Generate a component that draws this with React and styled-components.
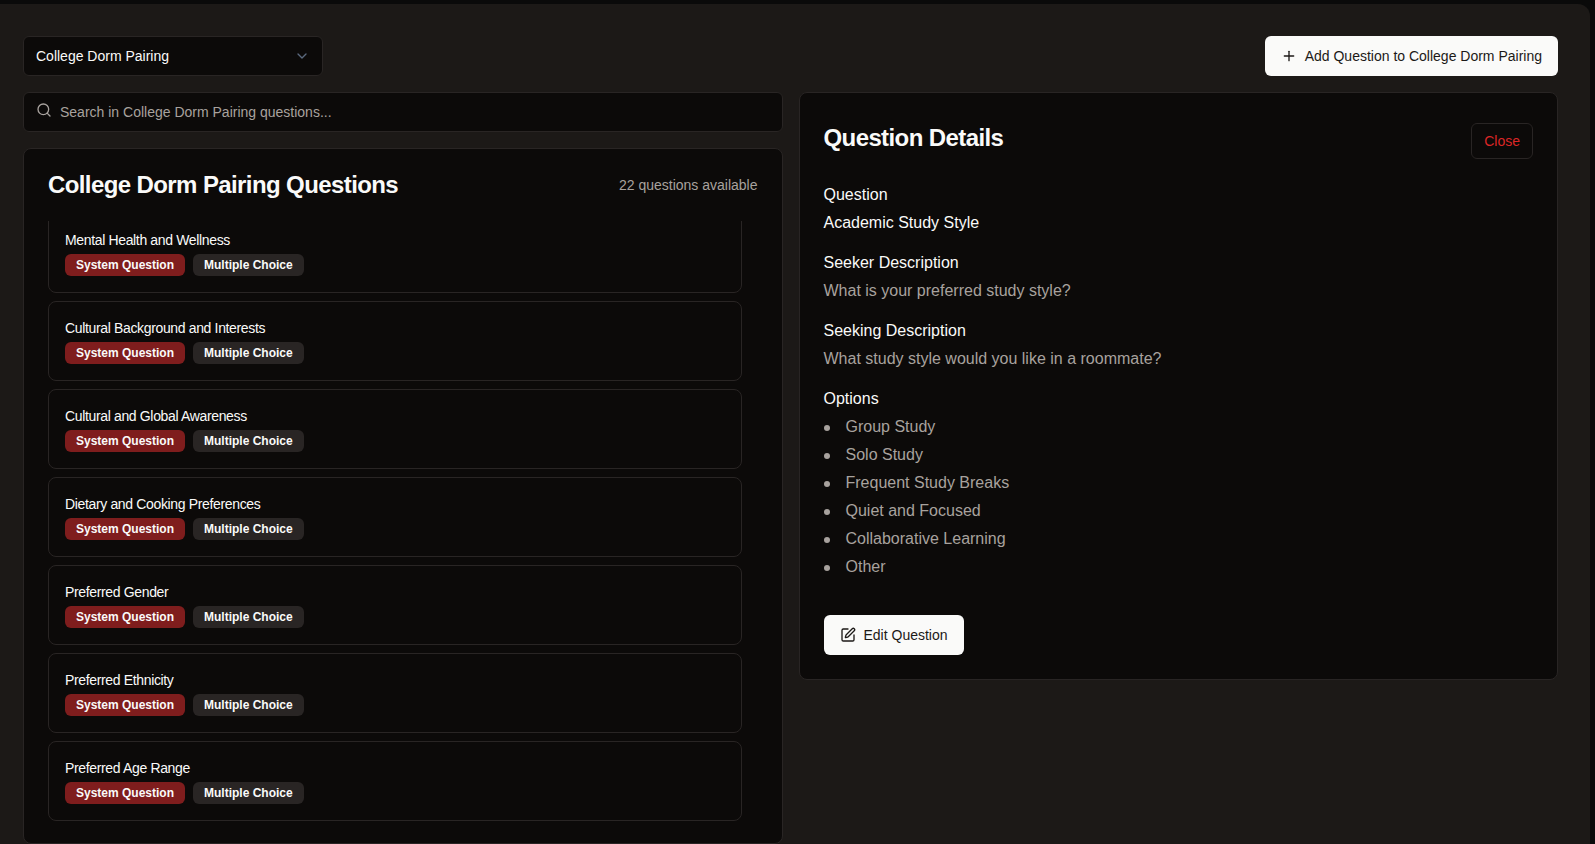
import React from 'react';
import styled, { createGlobalStyle } from 'styled-components';
import { ChevronDown, Search, Plus, SquarePen } from 'lucide-react';

const GlobalStyle = createGlobalStyle`
  * { box-sizing: border-box; }
  html, body {
    margin: 0;
    height: 100%;
    overflow: hidden;
    background: #0a0a0a;
    color: #fafaf9;
    font-family: "Liberation Sans", Arial, sans-serif;
  }
`;

const Panel = styled.main`
  height: 840px;
  margin: 4px 5px 0 0;
  padding: 32px 32px 0 23px;
  background: #1c1917;
  border-top-right-radius: 12px;
  overflow: hidden;
`;

const TopBar = styled.div`
  display: flex;
  justify-content: space-between;
  align-items: flex-start;
  margin-bottom: 16px;
`;

const SelectBox = styled.button`
  display: flex;
  align-items: center;
  justify-content: space-between;
  width: 300px;
  height: 40px;
  padding: 0 12px;
  background: #0c0a09;
  border: 1px solid #292524;
  border-radius: 6px;
  color: #fafaf9;
  font: 14px "Liberation Sans", Arial, sans-serif;
  svg { color: #64748b; opacity: 0.9; }
`;

const PrimaryButton = styled.button`
  display: inline-flex;
  align-items: center;
  gap: 8px;
  height: 40px;
  padding: 0 16px;
  background: #fafaf9;
  border: none;
  border-radius: 6px;
  color: #1c1917;
  font: 14px "Liberation Sans", Arial, sans-serif;
`;

const Columns = styled.div`
  display: grid;
  grid-template-columns: 1fr 1fr;
  gap: 16px;
  align-items: start;
`;

const LeftColumn = styled.div`
  display: flex;
  flex-direction: column;
  gap: 16px;
`;

const SearchBox = styled.label`
  display: flex;
  align-items: center;
  gap: 8px;
  height: 40px;
  padding: 0 12px;
  background: #0c0a09;
  border: 1px solid #292524;
  border-radius: 6px;
  svg { color: #a8a29e; margin-bottom: 4px; }
`;

const SearchInput = styled.input`
  flex: 1;
  padding: 0;
  background: transparent;
  border: none;
  outline: none;
  color: #fafaf9;
  font: 14px "Liberation Sans", Arial, sans-serif;
  &::placeholder { color: #a8a29e; opacity: 1; }
`;

const Card = styled.section`
  background: #0c0a09;
  border: 1px solid #292524;
  border-radius: 8px;
`;

const ListCard = styled(Card)`
  display: flex;
  flex-direction: column;
  height: 696px;
  padding: 0 24px 22px;
`;

const ListHeader = styled.header`
  display: flex;
  justify-content: space-between;
  align-items: center;
  height: 72px;
  flex: none;
`;

const Title = styled.h2`
  margin: 0;
  font-size: 24px;
  line-height: 32px;
  font-weight: 700;
  letter-spacing: -0.6px;
`;

const Count = styled.span`
  color: #a8a29e;
  font-size: 14px;
`;

const QuestionList = styled.div`
  flex: 1;
  min-height: 0;
  display: flex;
  flex-direction: column;
  justify-content: flex-end;
  gap: 8px;
  padding-right: 16px;
  overflow: hidden;
`;

const QuestionItem = styled.article`
  flex: none;
  height: 80px;
  padding: 16px;
  background: #0c0a09;
  border: 1px solid #292524;
  border-radius: 8px;
`;

const QuestionName = styled.div`
  font-size: 14px;
  line-height: 20px;
  letter-spacing: -0.35px;
  margin-bottom: 4px;
`;

const BadgeRow = styled.div`
  display: flex;
  gap: 8px;
`;

const Badge = styled.span`
  display: inline-flex;
  align-items: center;
  height: 22px;
  padding: 0 11px;
  border-radius: 6px;
  background: ${p => (p.$system ? '#7f1d1d' : '#292524')};
  color: #fafaf9;
  font-size: 12px;
  font-weight: 700;
`;

const DetailCard = styled(Card)`
  height: 588px;
  padding: 24px;
`;

const DetailHeader = styled.header`
  display: flex;
  justify-content: space-between;
  align-items: flex-start;
  margin-bottom: 22px;
`;

const DetailTitle = styled(Title)`
  margin-top: 5px;
`;

const CloseButton = styled.button`
  height: 36px;
  margin-top: 6px;
  padding: 0 12px;
  background: #0c0a09;
  border: 1px solid #292524;
  border-radius: 6px;
  color: #dc2626;
  font: 14px "Liberation Sans", Arial, sans-serif;
`;

const Section = styled.div`
  margin-bottom: 12px;
`;

const Label = styled.div`
  font-size: 16px;
  line-height: 28px;
`;

const Value = styled.div`
  font-size: 16px;
  line-height: 28px;
  color: ${p => (p.$strong ? '#fafaf9' : '#a8a29e')};
`;

const OptionList = styled.ul`
  margin: 0;
  padding: 0;
  list-style: none;
  color: #a8a29e;
  font-size: 16px;
  line-height: 28px;
`;

const OptionItem = styled.li`
  display: flex;
  align-items: center;
  &::before {
    content: '';
    width: 6px;
    height: 6px;
    margin: 2px 16px 0 0;
    border-radius: 50%;
    background: #a8a29e;
  }
`;

const Actions = styled.div`
  margin-top: 34px;
`;

const questions = [
  'Mental Health and Wellness',
  'Cultural Background and Interests',
  'Cultural and Global Awareness',
  'Dietary and Cooking Preferences',
  'Preferred Gender',
  'Preferred Ethnicity',
  'Preferred Age Range',
];

const options = ['Group Study', 'Solo Study', 'Frequent Study Breaks', 'Quiet and Focused', 'Collaborative Learning', 'Other'];

export default function App() {
  return (
    <Panel>
      <GlobalStyle />
      <TopBar>
        <SelectBox>
          College Dorm Pairing
          <ChevronDown size={16} />
        </SelectBox>
        <PrimaryButton>
          <Plus size={16} />
          Add Question to College Dorm Pairing
        </PrimaryButton>
      </TopBar>
      <Columns>
        <LeftColumn>
          <SearchBox>
            <Search size={16} />
            <SearchInput placeholder="Search in College Dorm Pairing questions..." />
          </SearchBox>
          <ListCard>
            <ListHeader>
              <Title>College Dorm Pairing Questions</Title>
              <Count>22 questions available</Count>
            </ListHeader>
            <QuestionList>
              {questions.map(q => (
                <QuestionItem key={q}>
                  <QuestionName>{q}</QuestionName>
                  <BadgeRow>
                    <Badge $system>System Question</Badge>
                    <Badge>Multiple Choice</Badge>
                  </BadgeRow>
                </QuestionItem>
              ))}
            </QuestionList>
          </ListCard>
        </LeftColumn>
        <DetailCard>
          <DetailHeader>
            <DetailTitle>Question Details</DetailTitle>
            <CloseButton>Close</CloseButton>
          </DetailHeader>
          <Section>
            <Label>Question</Label>
            <Value $strong>Academic Study Style</Value>
          </Section>
          <Section>
            <Label>Seeker Description</Label>
            <Value>What is your preferred study style?</Value>
          </Section>
          <Section>
            <Label>Seeking Description</Label>
            <Value>What study style would you like in a roommate?</Value>
          </Section>
          <Section>
            <Label>Options</Label>
            <OptionList>
              {options.map(o => <OptionItem key={o}>{o}</OptionItem>)}
            </OptionList>
          </Section>
          <Actions>
            <PrimaryButton>
              <SquarePen size={16} />
              Edit Question
            </PrimaryButton>
          </Actions>
        </DetailCard>
      </Columns>
    </Panel>
  );
}
